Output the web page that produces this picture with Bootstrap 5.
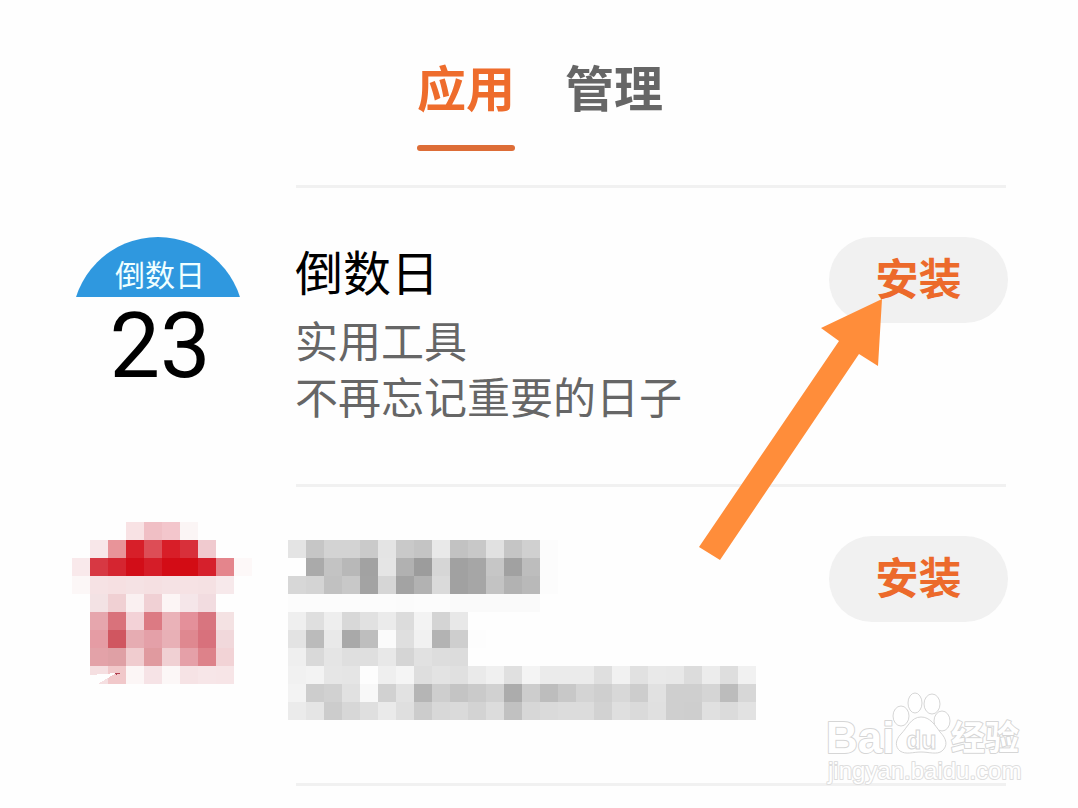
<!DOCTYPE html>
<html lang="zh-CN">
<head>
<meta charset="utf-8">
<meta name="viewport" content="width=device-width, initial-scale=1">
<title>应用</title>
<link href="https://cdn.jsdelivr.net/npm/bootstrap@5.3.0/dist/css/bootstrap.min.css" rel="stylesheet">
<style>
  body { background: #fefefe; color: #000; font-family: "Noto Sans CJK SC", sans-serif; }
  .app-tabs { gap: 50px; padding-top: 50px; padding-left: 2px; height: 185px; }
  .app-tabs a { color: #666; font-size: 49px; line-height: 72px; font-weight: 700; text-decoration: none; }
  .app-tabs a.active { color: #ee6c2c; }
  .app-tabs a.active::after { content: ""; display: block; height: 6px; margin-top: 23px; border-radius: 3px; background: #dd6d37; }
  .app-list { padding: 0 70px 0 72px; }
  .app-item { height: 296px; padding-top: 49px; }
  .rule { height: 3px; margin: 0 2px 0 224px; background: #f1f1f1; }
  .app-icon { width: 216px; }
  .app-icon.blurred { margin-top: -14px; }
  .app-text.blurred { margin-top: 4px; padding-left: 0; }
  .count-icon { width: 172px; }
  .count-top { height: 60px; padding: 14px 0 0 4px; background: #2f98df; color: #f0ffff; clip-path: circle(86px at 50% 86px); font-size: 30px; line-height: 44px; }
  .count-number { padding-left: 4px; font-family: Roboto, sans-serif; font-size: 90px; line-height: 100px; }
  .app-text { padding-left: 7px; }
  .app-name { font-size: 48px; line-height: 66px; margin-bottom: 8px; }
  .app-note { color: #666; font-size: 43px; line-height: 56px; }
  .install { width: 179px; height: 86px; background: #f1f1f1; color: #ec6a2b; font-size: 43px; line-height: 60px; font-weight: 700; border: 0; padding: 0 0 8px; }
  .install:hover { background: #e8e8e8; color: #ec6a2b; }
  .pointer { right: 126px; top: 62px; pointer-events: none; }
  .site-mark { right: 50px; bottom: 20px; pointer-events: none; }
</style>
</head>
<body>
<main class="position-relative min-vh-100">
  <nav class="app-tabs d-flex justify-content-center align-items-start" aria-label="应用">
    <a class="active" href="#apps" aria-current="page">应用</a>
    <a href="#manage">管理</a>
  </nav>
  <div class="app-list" id="apps">
    <div class="rule"></div>
    <section class="app-item d-flex align-items-start">
      <div class="app-icon flex-shrink-0">
        <div class="count-icon text-center">
          <div class="count-top">倒数日</div>
          <div class="count-number">23</div>
        </div>
      </div>
      <div class="app-text flex-grow-1">
        <div class="app-name">倒数日</div>
        <div class="app-note">实用工具</div>
        <div class="app-note">不再忘记重要的日子</div>
      </div>
      <div class="position-relative flex-shrink-0">
        <button type="button" class="install btn rounded-pill">安装</button>
        <svg class="pointer position-absolute" width="183" height="261" viewBox="699 299 183 261" aria-hidden="true"><path d="M882 299 878 366 859 354 720 560 699 547 839 341 821 328Z" fill="#ff8d3a"/></svg>
      </div>
    </section>
    <div class="rule"></div>
    <section class="app-item d-flex align-items-start">
      <div class="app-icon blurred flex-shrink-0">
        <svg class="d-block" id="iconMosaic" width="180" height="162" viewBox="0 0 180 162" shape-rendering="crispEdges" aria-hidden="true"></svg>
      </div>
      <div class="app-text blurred flex-grow-1">
        <svg class="d-block" id="textMosaic" width="468" height="180" viewBox="0 0 468 180" shape-rendering="crispEdges" aria-hidden="true"></svg>
      </div>
      <div class="flex-shrink-0">
        <button type="button" class="install btn rounded-pill">安装</button>
      </div>
    </section>
    <div class="rule"></div>
  </div>
  <svg class="site-mark position-absolute" width="208" height="100" viewBox="820 688 208 100" fill="#fff" stroke="#d6d6d6" stroke-width="1" role="img" aria-label="Baidu 经验">
    <g paint-order="stroke" stroke-width="2" stroke-linejoin="round">
      <text x="826" y="753" font-family="Liberation Sans, sans-serif" font-weight="700" font-size="44">Bai</text>
      <text x="951" y="750" font-family="Noto Sans CJK SC, sans-serif" font-weight="700" font-size="34">经验</text>
      <text x="828" y="779" font-family="Liberation Sans, sans-serif" font-size="24" stroke="#dedede">jingyan.baidu.com</text>
    </g>
    <ellipse cx="901" cy="716" rx="8" ry="10"/>
    <ellipse cx="915" cy="703" rx="7" ry="10"/>
    <ellipse cx="932" cy="704" rx="8" ry="10"/>
    <ellipse cx="942" cy="721" rx="8" ry="10"/>
    <path d="M921 717C930 717 935 725 940 732C947 739 948 746 942 751C937 755 929 752 921 752C913 752 906 755 900 751C895 747 895 740 901 734C907 728 911 717 921 717Z"/>
    <text x="906" y="749" font-family="Liberation Sans, sans-serif" font-weight="700" font-size="25">du</text>
  </svg>
</main>
<script>
  const CELL = 18;
  // Each string is one row of cells; "-" leaves a cell empty.
  const iconRows = [
    "- - - f8e2e4 f0bfc5 f3c6cc fbf5f5 - - -",
    "- f8e7e9 e89499 d71f29 dd4d56 d81e28 d8303a f0cacf - -",
    "f9e9eb d73843 d52530 d20d18 d51d28 d30c16 d30c14 d6202c e4858c fdf8f8",
    "fcf7f7 f6e2e4 f6e0e2 f5e2e4 f5e0e2 f5e2e4 f6e2e4 f5e1e3 f7e9eb -",
    "- f3e2e4 f0d0d3 faf0f1 f0d0d4 fcf5f5 f5e6e9 f2dce0 - -",
    "- e6a6ad d9727b f3d2d7 dc7a83 eab2b8 e4909a d8757f f4e2e3 -",
    "- e59ca4 d05660 e6acb2 e4a0a8 e8b0b6 df8890 d8717c f1d8db -",
    "- e3a2a8 dfa0a5 f0cccf e09a9f f0d0d3 e5a0a8 dd828a f2d3d6 -",
    "- f5dfe1 f1c8ca fcf6f6 f6e3e6 fcf7f7 f6e3e5 f7e6e8 f7e5e7 -"
  ];
  const textRows = [
    "e4 c6 d3 d3 ca e4 c9 c4 e9 c2 c8 e1 c5 d0 fc",
    "- aa c3 b8 a2 e5 b1 9c d6 a1 a6 c6 a1 bd fc",
    "d7 d4 c1 c8 a3 d6 a3 b2 da a1 a6 c3 b2 b9 fc",
    "fc fc fc fc fc fc fb fc fc fa fa fa fa fa",
    "ef df ee d8 e1 eb dc f3 d4 e8",
    "e3 bb e9 a9 be fb df f1 b3 ce fd",
    "ef d9 e5 df df e8 d5 e1 dd dc",
    "f1 f3 e6 e5 fd ef f5 de e3 e0 ea f0 e0 f4 eb eb eb df f1 e1 e9 e8 dc ec de f1",
    "f3 cd d1 e1 f8 d1 e2 b5 ce c4 ca d1 ac cd bd c8 d4 cf d8 cd e1 cf cf d5 bc d7",
    "eb e5 cc d7 df ea df cc d8 da d3 dc c1 d7 da dc dc d2 df da e0 cf ce e0 db e2"
  ];
  function mosaic(rows) {
    return rows.map((row, y) => row.split(" ").map((c, x) => c === "-" ? "" :
      `<rect x="${x * CELL}" y="${y * CELL}" width="${CELL}" height="${CELL}" fill="#${c.length === 2 ? c + c + c : c}"/>`
    ).join("")).join("");
  }
  document.getElementById("iconMosaic").innerHTML = mosaic(iconRows) +
    '<path d="M18 153 44 151 26 162H18Z" fill="#fefefe"/><path d="M42 151 49 151 44 153Z" fill="#b04050"/>';
  document.getElementById("textMosaic").innerHTML = mosaic(textRows);
</script>
</body>
</html>
